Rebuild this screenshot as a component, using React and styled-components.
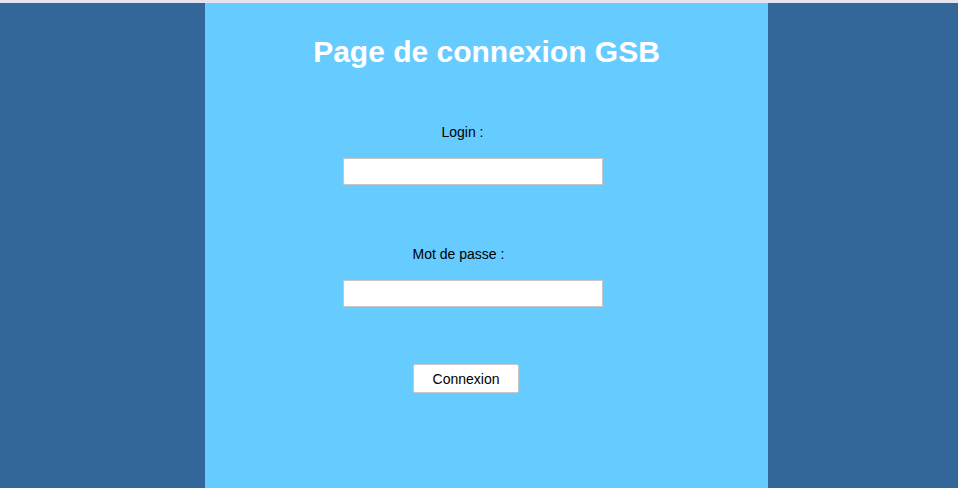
import React from "react";
import styled, { createGlobalStyle } from "styled-components";

const GlobalStyle = createGlobalStyle`
  html, body {
    margin: 0;
    padding: 0;
  }
  body {
    background: #336699;
    font-family: "Liberation Sans", Arial, sans-serif;
    border-top: 3px solid #e4e4f0;
  }
`;

const Page = styled.div`
  display: flex;
  justify-content: center;
  padding-left: 15px;
`;

const Panel = styled.main`
  width: 563px;
  min-height: calc(100vh - 3px);
  background: #66ccff;
  display: flex;
  flex-direction: column;
  align-items: center;
  padding-top: 30px;
  box-sizing: border-box;
`;

const Title = styled.h1`
  margin: 0 0 54px;
  font-size: 30px;
  font-weight: bold;
  color: #ffffff;
  line-height: 37px;
`;

const Form = styled.form`
  display: flex;
  flex-direction: column;
  align-items: center;
`;

const Label = styled.label`
  font-size: 14px;
  line-height: 16px;
  color: #000;
  margin-right: ${(p) => p.$shift * 2}px;
  margin-top: ${(p) => p.$top}px;
`;

const Input = styled.input`
  box-sizing: border-box;
  width: 260px;
  height: 27px;
  margin-top: 18px;
  margin-right: 27px;
  border: 1px solid #c6c6c6;
  background: #fff;
  outline: none;
`;

const Button = styled.button`
  box-sizing: border-box;
  margin-top: 57px;
  margin-right: 41px;
  width: 106px;
  height: 29px;
  font-family: "Liberation Sans", Arial, sans-serif;
  font-size: 14px;
  color: #000;
  background: #fff;
  border: 1px solid #c8c8c8;
  border-radius: 2px;
`;

export default function App() {
  return (
    <>
      <GlobalStyle />
      <Page>
        <Panel>
          <Title>Page de connexion GSB</Title>
          <Form onSubmit={(e) => e.preventDefault()}>
            <Label htmlFor="login" $shift={24} $top={0}>
              Login :
            </Label>
            <Input id="login" type="text" />
            <Label htmlFor="mdp" $shift={28} $top={61}>
              Mot de passe :
            </Label>
            <Input id="mdp" type="password" />
            <Button type="submit">Connexion</Button>
          </Form>
        </Panel>
      </Page>
    </>
  );
}
